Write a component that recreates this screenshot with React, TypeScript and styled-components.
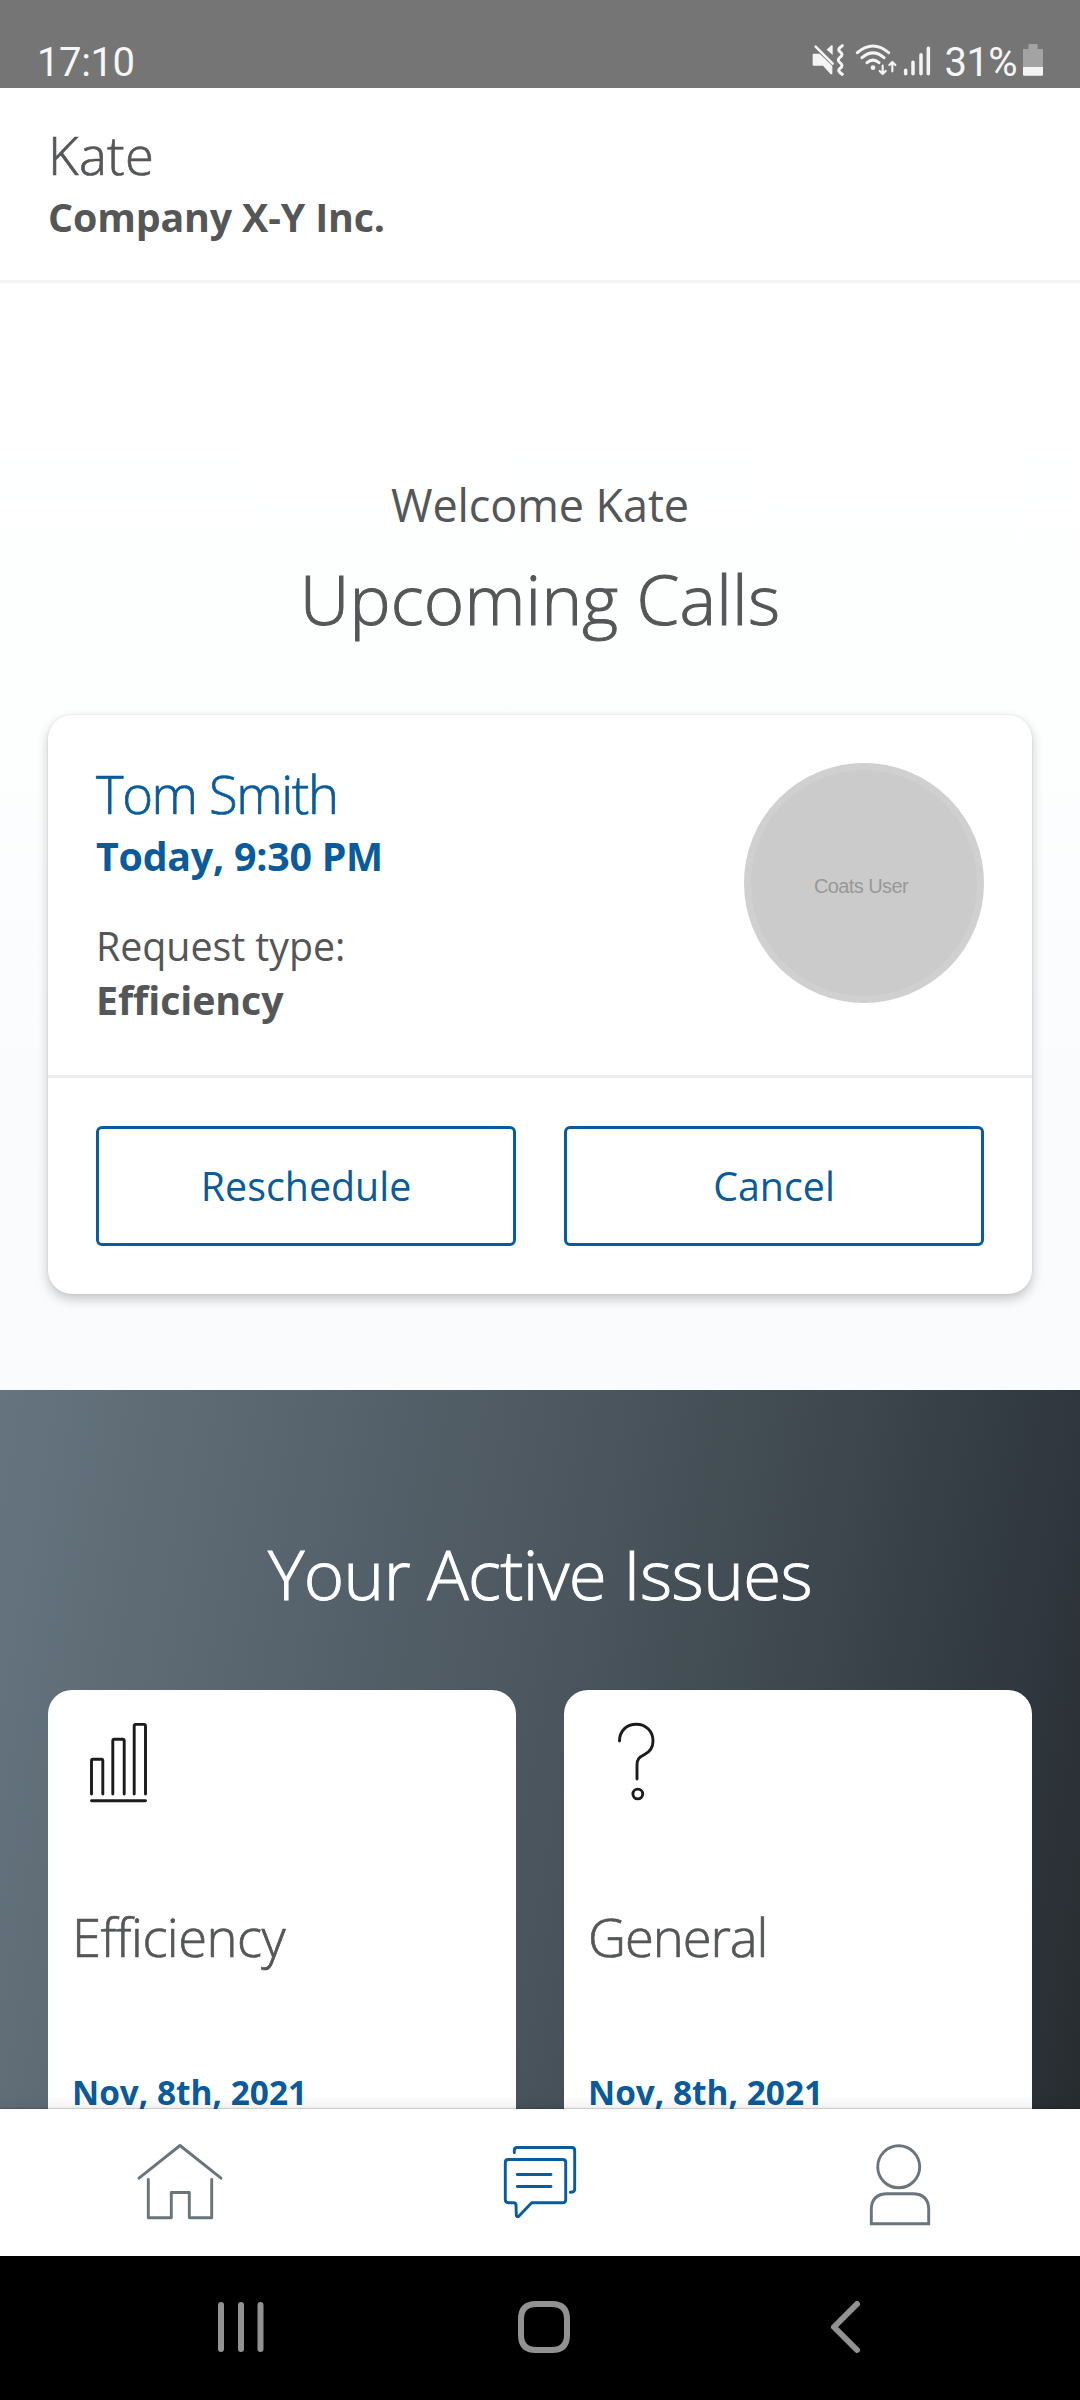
import React from "react";
import styled, { createGlobalStyle } from "styled-components";

const ink = "#545658";
const blue = "#0a5b9b";
const slate = "#6a747c";

const GlobalStyle = createGlobalStyle`
  *, *::before, *::after { box-sizing: border-box; }
  body { margin: 0; font-family: "Open Sans", "Noto Sans", sans-serif; color: ${ink}; background: #fff; }
  svg { display: block; flex: none; }
`;

const Screen = styled.div`
  display: flex;
  flex-direction: column;
  width: 1080px;
  height: 2400px;
  overflow: hidden;
`;

/* Status bar */
const StatusBar = styled.div`
  display: flex;
  justify-content: space-between;
  align-items: flex-end;
  flex: none;
  height: 88px;
  padding: 0 37px 1px;
  background: #757575;
  color: #f6f6f6;
  font: 400 40px/48px Roboto, sans-serif;
`;
const Clock = styled.span`
  letter-spacing: -0.4px;
`;
const StatusGroup = styled.div`
  display: flex;
  align-items: flex-end;
`;
const StatusIcon = styled.svg<{ $gap?: number }>`
  height: 36px;
  margin: 0 ${p => p.$gap ?? 0}px 11px 0;
  color: #f4f4f4;
`;
const Percent = styled.span`
  margin-right: 6px;
  letter-spacing: -0.6px;
`;

/* Typography */
const Light = styled.div<{ $track?: number; $color?: string }>`
  font-size: 52.5px;
  line-height: 56px;
  font-weight: 300;
  white-space: nowrap;
  letter-spacing: ${p => p.$track ?? 0}px;
  color: ${p => p.$color ?? ink};
  -webkit-text-stroke: 0.7px currentColor;
`;
const Body = styled.div<{ $bold?: boolean; $track?: number; $color?: string }>`
  font-size: 39.375px;
  line-height: 48px;
  font-weight: ${p => (p.$bold ? 700 : 400)};
  letter-spacing: ${p => p.$track ?? 0}px;
  color: ${p => p.$color ?? ink};
`;
const Heading = styled.h1<{ $track: number; $color?: string }>`
  margin: 0;
  font-size: 69px;
  line-height: 94px;
  font-weight: 300;
  text-align: center;
  letter-spacing: ${p => p.$track}px;
  color: ${p => p.$color ?? ink};
  -webkit-text-stroke: 1px currentColor;
`;

/* Header */
const Header = styled.header`
  display: flex;
  flex-direction: column;
  gap: 10px;
  flex: none;
  height: 195px;
  padding: 39px 48px 0;
  border-bottom: 3px solid #f3f4f4;
  background: #fff;
`;

const Content = styled.main`
  flex: 1;
  min-height: 0;
  display: flex;
  flex-direction: column;
  overflow: hidden;
`;

/* Upcoming calls */
const Hero = styled.section`
  flex: none;
  height: 1107px;
  padding: 192px 48px 0;
  background: linear-gradient(180deg, #fff 0%, #fdfefe 40%, #fafbfd 80%, #fafbfd 100%);
`;
const Welcome = styled.div`
  margin-bottom: 16px;
  font-size: 45px;
  line-height: 60px;
  letter-spacing: -0.1px;
  text-align: center;
`;
const CallCard = styled.article`
  display: flex;
  flex-direction: column;
  margin-top: 70px;
  border-radius: 24px;
  background: #fff;
  box-shadow: 0 5px 12px rgba(0, 0, 0, 0.22), 0 0 3px rgba(0, 0, 0, 0.08);
`;
const CallBody = styled.div`
  display: flex;
  justify-content: space-between;
  height: 363px;
  padding: 48px 48px 0;
  border-bottom: 3px solid #ececec;
`;
const CallDetails = styled.div`
  display: flex;
  flex-direction: column;
  gap: 42px;
  padding-top: 3px;
`;
const Pair = styled.div<{ $gap: number }>`
  display: flex;
  flex-direction: column;
  gap: ${p => p.$gap}px;
`;
const Avatar = styled.div`
  display: flex;
  align-items: center;
  justify-content: center;
  width: 240px;
  height: 240px;
  padding: 5px 6px 0 0;
  border: 7px solid #d0d0d0;
  border-radius: 50%;
  background: #cbcbcb;
  color: #989898;
  font: 400 20px/24px "Liberation Sans", Arial, sans-serif;
  letter-spacing: -0.6px;
`;
const CallActions = styled.div`
  display: grid;
  grid-template-columns: 1fr 1fr;
  gap: 48px;
  padding: 48px;
`;
const OutlineButton = styled.button`
  height: 120px;
  padding: 0;
  border: 3px solid ${blue};
  border-radius: 6px;
  background: #fff;
  color: ${blue};
  font: 400 39.375px/48px "Open Sans", "Noto Sans", sans-serif;
`;

/* Active issues */
const Issues = styled.section`
  flex: 1;
  min-height: 0;
  display: flex;
  flex-direction: column;
  gap: 70px;
  padding: 136px 48px 0;
  background: linear-gradient(100deg, #66747f 0%, #4c575f 48%, #3d464d 72%, #2f363d 90%, #272c2f 100%);
`;
const IssueGrid = styled.div`
  flex: 1;
  min-height: 0;
  display: grid;
  grid-template-columns: 1fr 1fr;
  gap: 48px;
`;
const IssueCard = styled.article`
  display: flex;
  flex-direction: column;
  padding: 24px 24px 0;
  border-radius: 24px 24px 0 0;
  background: #fff;
`;
const IssueDate = styled.div`
  margin-top: 103px;
  font-size: 33.4px;
  line-height: 48px;
  font-weight: 700;
  color: ${blue};
`;
const IssueIcon = styled.svg`
  width: 96px;
  height: 96px;
  margin-bottom: 99px;
  fill: none;
  stroke: #1b1b1b;
  stroke-width: 2.9;
  stroke-linecap: round;
  stroke-linejoin: round;
`;

/* Tab bar */
const TabBar = styled.nav`
  position: relative;
  display: grid;
  grid-template-columns: repeat(3, 1fr);
  align-items: center;
  justify-items: center;
  flex: none;
  height: 147px;
  background: #fff;
  box-shadow: 0 -1px 1px rgba(0, 0, 0, 0.14), 0 -2px 14px rgba(0, 0, 0, 0.1);
`;
const TabIcon = styled.svg<{ $active?: boolean }>`
  width: 96px;
  height: 96px;
  fill: none;
  stroke: ${p => (p.$active ? blue : slate)};
  stroke-width: 2.9;
  stroke-linecap: round;
  stroke-linejoin: round;
`;

/* System navigation */
const SystemBar = styled.div`
  display: flex;
  justify-content: space-between;
  align-items: center;
  flex: none;
  height: 144px;
  padding: 0 217px;
  background: #000;
`;
const SystemIcon = styled.svg<{ $after?: number }>`
  height: 56px;
  margin: 0 ${p => p.$after ?? 0}px 2px 0;
  fill: none;
  stroke: #929292;
  stroke-width: 6;
  stroke-linecap: round;
  stroke-linejoin: round;
`;

const issues = [
  {
    title: "Efficiency",
    track: -0.5,
    date: "Nov, 8th, 2021",
    icon: (
      <>
        <path d="M19.5 80V46.8q0-1.5 1.5-1.5h8.3q1.5 0 1.5 1.5V80" />
        <path d="M40.8 80V26.8q0-1.5 1.5-1.5h8.4q1.5 0 1.5 1.5V80" />
        <path d="M62.2 80V11.9q0-1.5 1.5-1.5H72q1.5 0 1.5 1.5V80" />
        <path d="M19.5 86.7h54" />
      </>
    ),
  },
  {
    title: "General",
    track: -1.05,
    date: "Nov, 8th, 2021",
    icon: (
      <>
        <path d="M31.5 27C31.5 17 38.5 10.3 48.3 10.3S65 17.5 65 27C65 33.5 61.5 38 56.5 40.5C51 43.3 49 45 49 51V65" />
        <circle cx="49.8" cy="80" r="4.9" />
      </>
    ),
  },
];

export default function App() {
  return (
    <Screen>
      <GlobalStyle />
      <StatusBar>
        <Clock>17:10</Clock>
        <StatusGroup>
          <StatusIcon $gap={9} width="34" viewBox="94 60 102 108" fill="currentColor">
            <path d="M99 101H117L155 138V163L150 163L127 137H99Q96 137 96 134V104Q96 101 99 101Z" />
            <path d="M138 89L152 76Q156 74 156 79V105Z" />
            <path d="M105 80L156 131" stroke="currentColor" strokeWidth="8" strokeLinecap="round" />
            <path d="M185 77Q168 88 178 95Q190 103 178 112Q168 120 178 128Q190 136 178 145Q168 153 185 163" fill="none" stroke="currentColor" strokeWidth="9" strokeLinecap="round" />
          </StatusIcon>
          <StatusIcon $gap={6} width="42" viewBox="225 60 126 108" fill="none" stroke="currentColor" strokeWidth="9" strokeLinecap="round" strokeLinejoin="round">
            <path d="M232 98Q279 58 326 98M246 113Q279 84 312 113M261 128Q279 113 297 128" />
            <circle cx="279" cy="143" r="7" fill="currentColor" stroke="none" />
            <path d="M308 137V162M299 153L308 162L317 153M337 154V127M328 135L337 126L346 135" strokeWidth="6.5" />
          </StatusIcon>
          <StatusIcon $gap={13} width="29" viewBox="371 60 87 108" stroke="currentColor" strokeWidth="10.5" strokeLinecap="round">
            <path d="M379 151V161M401 127V161M425 104V161M447 85V161" />
          </StatusIcon>
          <Percent>31%</Percent>
          <StatusIcon width="20" viewBox="729 60 60 108">
            <path d="M745 76Q745 72 749 72H769Q773 72 773 76V87H787Q789 87 789 89V141H729V89Q729 87 731 87H745Z" fill="#a3a3a3" />
            <path d="M729 141H789V164Q789 167 786 167H732Q729 167 729 164Z" fill="currentColor" />
          </StatusIcon>
        </StatusGroup>
      </StatusBar>

      <Header>
        <Light $track={0.4}>Kate</Light>
        <Body $bold $track={-0.15}>Company X-Y Inc.</Body>
      </Header>

      <Content>
        <Hero>
          <Welcome>Welcome Kate</Welcome>
          <Heading $track={0.2}>Upcoming Calls</Heading>
          <CallCard>
            <CallBody>
              <CallDetails>
                <Pair $gap={10}>
                  <Light $track={-1.35} $color={blue}>Tom Smith</Light>
                  <Body $bold $track={-0.25} $color={blue}>Today, 9:30 PM</Body>
                </Pair>
                <Pair $gap={6}>
                  <Body $track={-0.05}>Request type:</Body>
                  <Body $bold $track={-0.1}>Efficiency</Body>
                </Pair>
              </CallDetails>
              <Avatar>Coats User</Avatar>
            </CallBody>
            <CallActions>
              <OutlineButton>Reschedule</OutlineButton>
              <OutlineButton>Cancel</OutlineButton>
            </CallActions>
          </CallCard>
        </Hero>

        <Issues>
          <Heading $track={-0.62} $color="#fff">Your Active Issues</Heading>
          <IssueGrid>
            {issues.map(issue => (
              <IssueCard key={issue.title}>
                <IssueIcon viewBox="0 0 96 96">{issue.icon}</IssueIcon>
                <Light $track={issue.track}>{issue.title}</Light>
                <IssueDate>{issue.date}</IssueDate>
              </IssueCard>
            ))}
          </IssueGrid>
        </Issues>
      </Content>

      <TabBar>
        <TabIcon viewBox="0 0 96 96">
          <path d="M7 43.2L48 10.5L89 43.2" />
          <path d="M16.3 44.5V82.8H39.3V57.5H57.3V82.8H79.7V44.5" />
        </TabIcon>
        <TabIcon $active viewBox="0 0 96 96">
          <path d="M22.3 17.8V15.5Q22.3 12.5 25.3 12.5H79.7Q82.7 12.5 82.7 15.5V54.2Q82.7 57.2 78.3 57.2" />
          <path d="M16.3 24.5H70.7Q73.7 24.5 73.7 27.5V64.8Q73.7 67.8 70.7 67.8H39.7L27 81Q24.5 83 24.3 80L24 70Q24 67.8 21.5 67.8H17Q13.3 67.8 13.3 64.8V27.5Q13.3 24.5 16.3 24.5Z" />
          <path d="M25.3 39.5H59M25.3 51.5H59" />
        </TabIcon>
        <TabIcon viewBox="0 0 96 96">
          <circle cx="46.7" cy="31.8" r="21" />
          <path d="M19.3 88.8V75Q19.3 58.8 35.5 58.8H60.5Q76.7 58.8 76.7 75V88.8Z" strokeLinejoin="miter" />
        </TabIcon>
      </TabBar>

      <SystemBar>
        <SystemIcon width="48" viewBox="0 0 48 56">
          <path d="M4 6V50M24 6V50M43.5 6V50" />
        </SystemIcon>
        <SystemIcon $after={7} width="56" viewBox="0 0 56 56">
          <path d="M20 5H36Q51 5 51 20V36Q51 51 36 51H20Q5 51 5 36V20Q5 5 20 5Z" />
        </SystemIcon>
        <SystemIcon width="34" viewBox="0 0 34 56">
          <path d="M28 5L5 28L28 51" />
        </SystemIcon>
      </SystemBar>
    </Screen>
  );
}
